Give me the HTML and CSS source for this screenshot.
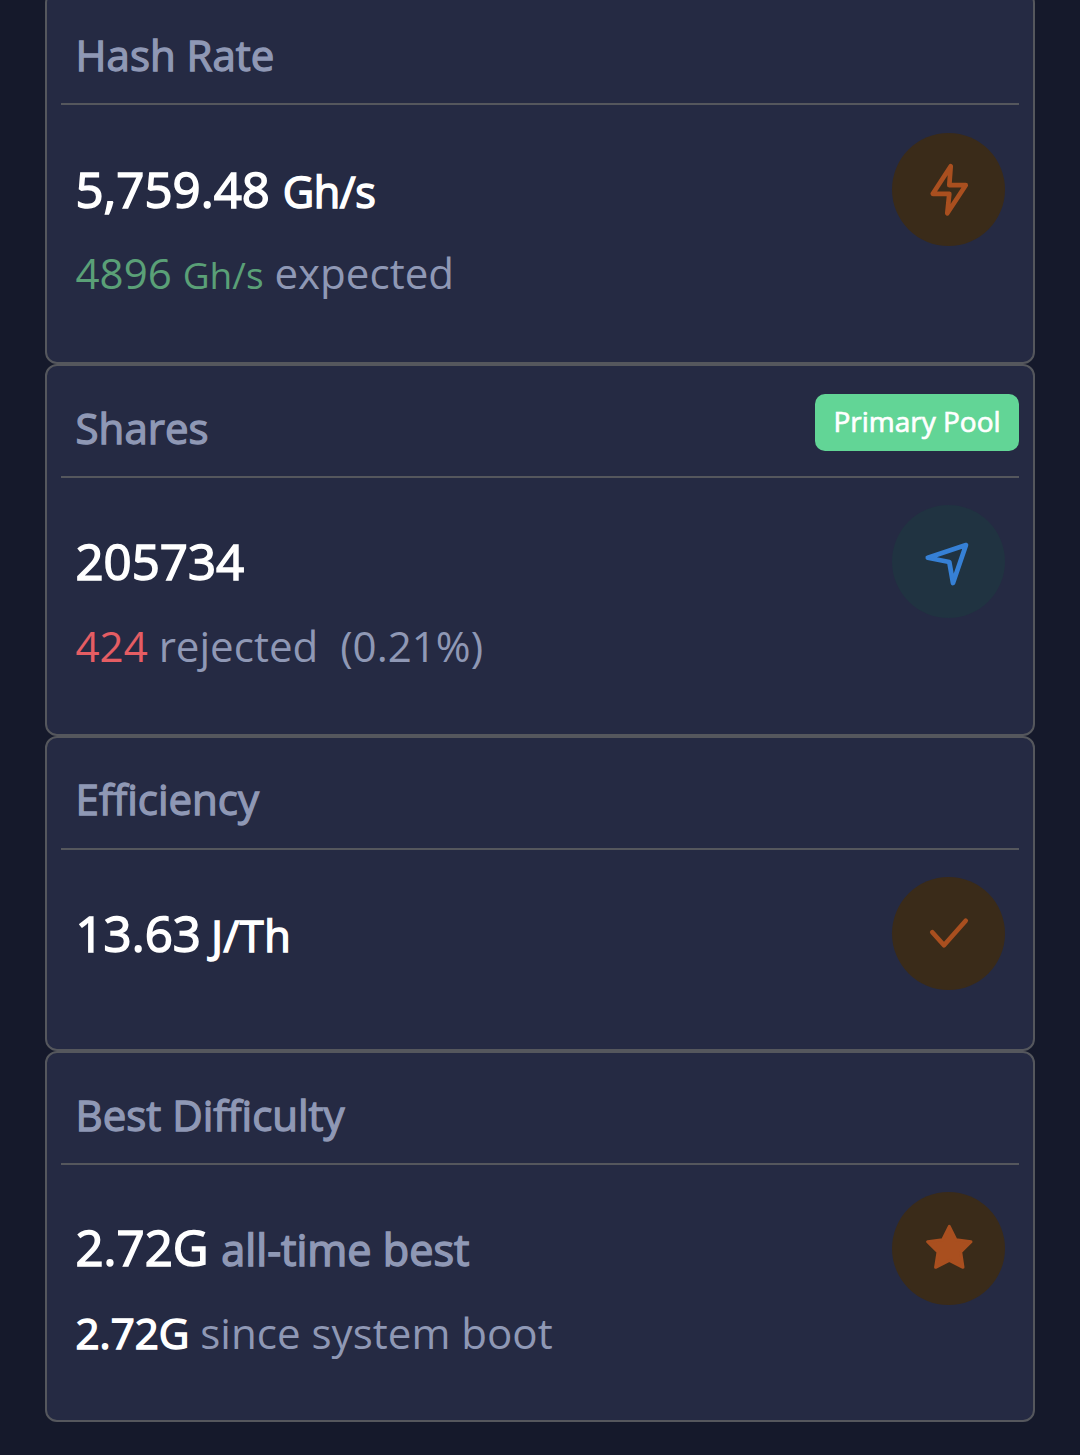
FILE: index.html
```
<!DOCTYPE html>
<html lang="en">
    <head>
        <meta charset="UTF-8">
        <title>Dashboard</title>
        <link rel="stylesheet" href="styles.css">
    </head>
    <body>
        <div class="cards">
            <div class="card first">
                <div class="card-header"><h5>Hash Rate</h5></div>
                <div class="card-body">
                    <div class="info">
                        <div class="value">5,759.48 <small class="rate">Gh/s</small></div>
                        <div class="sub"><span class="green">4896 <small>Gh/s</small></span> expected</div>
                    </div>
                    <div class="icon orange">
                        <svg viewBox="0 0 113 113"><path d="M58.7 33.3L57.3 52.2H73.7L55.3 80.3L57.3 60.8H40.8Z"/></svg>
                    </div>
                </div>
            </div>
            <div class="card">
                <div class="card-header">
                    <h5>Shares</h5>
                    <span class="badge">Primary Pool</span>
                </div>
                <div class="card-body">
                    <div class="info">
                        <div class="value">205734</div>
                        <div class="sub"><span class="red">424</span> rejected <span>&nbsp;(0.21%)</span></div>
                    </div>
                    <div class="icon blue">
                        <svg viewBox="0 0 113 113"><path d="M74 40L35.8 52.7L57.3 57L61 78Z"/></svg>
                    </div>
                </div>
            </div>
            <div class="card short">
                <div class="card-header"><h5>Efficiency</h5></div>
                <div class="card-body">
                    <div class="info">
                        <div class="value">13.63 <small class="power">J/Th</small></div>
                    </div>
                    <div class="icon orange">
                        <svg viewBox="0 0 113 113"><path d="M40.3 55.3L52 68.3L73.7 43.8"/></svg>
                    </div>
                </div>
            </div>
            <div class="card last">
                <div class="card-header"><h5>Best Difficulty</h5></div>
                <div class="card-body">
                    <div class="info">
                        <div class="value">2.72G <small class="muted">all-time best</small></div>
                        <div class="sub"><b>2.72G</b> since system boot</div>
                    </div>
                    <div class="icon orange star">
                        <svg viewBox="0 0 113 113"><path d="M57.3 34.3L64 47.8L79 49.8L68.7 60L71 75.3L57.3 68.3L43.6 75.3L46 60L35.6 49.8L50.6 47.8Z"/></svg>
                    </div>
                </div>
            </div>
        </div>
    </body>
</html>
```
FILE: styles.css
```
*{
    margin: 0;
    padding: 0;
    box-sizing: border-box;
}
html,body{
    height: 100%;
    overflow: hidden;
}
body{
    background: #15192b;
    color: #8f98b5;
    font-family: "Open Sans", "Noto Sans", sans-serif;
    font-size: 42px;
}
.cards{
    width: 990px;
    margin: -9px auto 0;
}
.card{
    height: 372px;
    padding: 0 14px;
    border: 2px solid #55575d;
    border-radius: 12px;
    background: #252a43;
}
.card.first{
    height: 373px;
}
.card.short{
    height: 315px;
}
.card.last{
    height: 371px;
}
.card-header{
    display: flex;
    justify-content: space-between;
    height: 112px;
    padding: 28px 0 0 14.6px;
    border-bottom: 2px solid #55575d;
}
.card-header h5{
    margin-top: 4px;
    font-size: 42px;
    font-weight: 400;
    line-height: 60px;
    -webkit-text-stroke: 1.3px;
}
.card.short h5{
    margin-top: 3px;
}
.badge{
    width: 204px;
    height: 57px;
    border-radius: 10px;
    background: #62d596;
    color: #fff;
    font-size: 28px;
    line-height: 55px;
    text-align: center;
    -webkit-text-stroke: 0.7px;
}
.card-body{
    display: flex;
    justify-content: space-between;
    padding: 27px 14px 0 14.5px;
}
.card.first .card-body{
    padding-top: 28px;
}
.info{
    padding-top: 20px;
    white-space: nowrap;
}
.card.last .info{
    padding-top: 19px;
}
.value{
    color: #fff;
    font-size: 49.2px;
    line-height: 72px;
    -webkit-text-stroke: 1.5px;
}
.value small{
    font-size: 43.2px;
}
.value .rate{
    letter-spacing: -0.4px;
}
.value .power{
    margin-left: -2.5px;
    letter-spacing: 0.6px;
}
.value .muted{
    color: #8f98b5;
}
.sub{
    margin-top: 13px;
    font-size: 42.1px;
    line-height: 72px;
}
.card.first .sub{
    margin-top: 9px;
}
.card.last .sub{
    margin-top: 11px;
}
.sub small{
    font-size: 37px;
}
.sub b{
    color: #fff;
    font-weight: 400;
    -webkit-text-stroke: 1.5px;
}
.green{
    color: #5aa077;
}
.red{
    color: #e55d63;
}
.icon{
    width: 113px;
    height: 113px;
    border-radius: 50%;
}
.icon svg{
    display: block;
    fill: none;
    stroke: currentColor;
    stroke-width: 4.7;
    stroke-linecap: round;
    stroke-linejoin: round;
}
.orange{
    background: #3a2b19;
    color: #a94f1f;
}
.blue{
    background: #203341;
    color: #3680d5;
}
.star svg{
    fill: currentColor;
    stroke-width: 3;
}
```
